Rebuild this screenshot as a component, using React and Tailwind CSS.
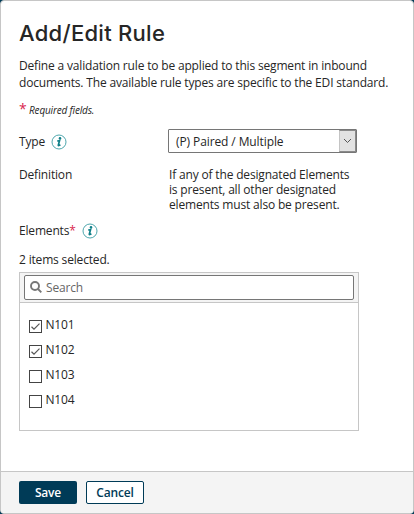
function InfoIcon() {
  return (
    <svg width="16" height="16" viewBox="0 0 16 16" aria-label="Info">
      <circle cx="8" cy="8" r="7" fill="#fff" stroke="#3a9ca3" strokeWidth="0.9" />
      <circle cx="9" cy="4.4" r="1.3" fill="#0f7f88" />
      <path d="M6.2 7 L8.5 6.7 L7.3 11.2 Q7.5 12 9.4 10.8" fill="none" stroke="#0f7f88" strokeWidth="1.7" />
    </svg>
  );
}

function CheckItem({ label, checked }) {
  return (
    <label className="flex h-[25px] items-center">
      <span className="mt-[3px] flex h-[13px] w-[13px] items-center justify-center border border-[#444] bg-white">
        {checked && (
          <svg width="11" height="11" viewBox="0 0 11 11" fill="none">
            <path d="M1.5 5.8 L4 8.2 L9.5 2.7" stroke="#555" strokeWidth="1.2" />
          </svg>
        )}
      </span>
      <span className="ml-[3.5px] text-[12px] leading-[16px]">{label}</span>
    </label>
  );
}

const items = [
  { label: "N101", checked: true },
  { label: "N102", checked: true },
  { label: "N103", checked: false },
  { label: "N104", checked: false },
];

export default function App() {
  return (
    <div className="h-[514px] w-[414px] bg-[#003b57] font-['Open_Sans',sans-serif] text-[12px] tracking-[-0.17px] text-[#262626]">
      <div className="flex h-full flex-col overflow-hidden rounded-[4px] border border-[#c6c6c6] bg-white">
        <main className="h-[470px] pl-[18px] pt-[19px]">
          <h1 className="h-[26px] whitespace-nowrap font-['Inter',sans-serif] text-[22px] font-medium leading-[26px] tracking-[0.28px]">Add/Edit Rule</h1>
          <p className="mt-[11px] whitespace-nowrap leading-[17px]">
            Define a validation rule to be applied to this segment in inbound
            <br />
            documents. The available rule types are specific to the EDI standard.
          </p>
          <p className="mt-[10px] flex h-[16px] items-center text-[10px] italic leading-[16px]">
            <span className="mr-[2.5px] text-[14px] not-italic text-[#d9264e]">*</span>
            <span className="pt-[1px]">Required fields.</span>
          </p>
          <div className="mt-[12px] flex h-[24px] items-center">
            <div className="flex w-[149px] items-center gap-[6px] pt-[1px]">
              Type <InfoIcon />
            </div>
            <div className="flex h-[24px] w-[189px] justify-between rounded-[1px] border border-[#767676]">
              <span className="pl-[7px] leading-[24px] tracking-[-0.1px]">(P) Paired / Multiple</span>
              <span className="flex w-[17px] items-center justify-center border border-[#8a8a8a] border-l-[#c4c4c4] bg-[#e2e2e2]">
                <svg width="9" height="6" viewBox="0 0 9 6" fill="none">
                  <path d="M1 1 L4.5 4.5 L8 1" stroke="#555" strokeWidth="1" />
                </svg>
              </span>
            </div>
          </div>
          <div className="mt-[14px] flex h-[45px]">
            <div className="w-[150px] leading-[15px]">Definition</div>
            <div className="whitespace-nowrap leading-[15px]">
              If any of the designated Elements
              <br />
              is present, all other designated
              <br />
              elements must also be present.
            </div>
          </div>
          <div className="mt-[10px] flex h-[18px] items-center">
            Elements<span className="mr-[6px] text-[#d9264e]">*</span>
            <InfoIcon />
          </div>
          <div className="mt-[11px] h-[21px] leading-[18px]">2 items selected.</div>
          <div className="h-[159px] w-[340px] border border-[#c6c6c6]">
            <div className="h-[30px] border-b border-[#c6c6c6] bg-[#f4f4f4] pl-[4px] pt-[2px]">
              <div className="flex h-[25px] w-[330px] items-center rounded-[2px] border border-[#767676] bg-white pl-[4px] text-[#666]">
                <svg width="14" height="14" viewBox="0 0 14 14" fill="none" stroke="#777" strokeWidth="1.9">
                  <circle cx="6" cy="5" r="4" />
                  <path d="M9 8 L12.3 11.3" />
                </svg>
                <span className="ml-[3px] pt-[1px]">Search</span>
              </div>
            </div>
            <div className="pl-[9px] pt-[9px]">
              {items.map((item) => (
                <CheckItem key={item.label} label={item.label} checked={item.checked} />
              ))}
            </div>
          </div>
        </main>
        <footer className="flex flex-1 gap-[9px] border-t border-[#c6c6c6] bg-[#f4f4f4] pl-[18px] pt-[9px] text-[12px] font-semibold">
          <button className="h-[23px] w-[58px] rounded-[2px] bg-[#003b57] text-white">Save</button>
          <button className="h-[23px] w-[58px] rounded-[2px] border border-[#003b57] bg-white text-[#003b57]">Cancel</button>
        </footer>
      </div>
    </div>
  );
}
